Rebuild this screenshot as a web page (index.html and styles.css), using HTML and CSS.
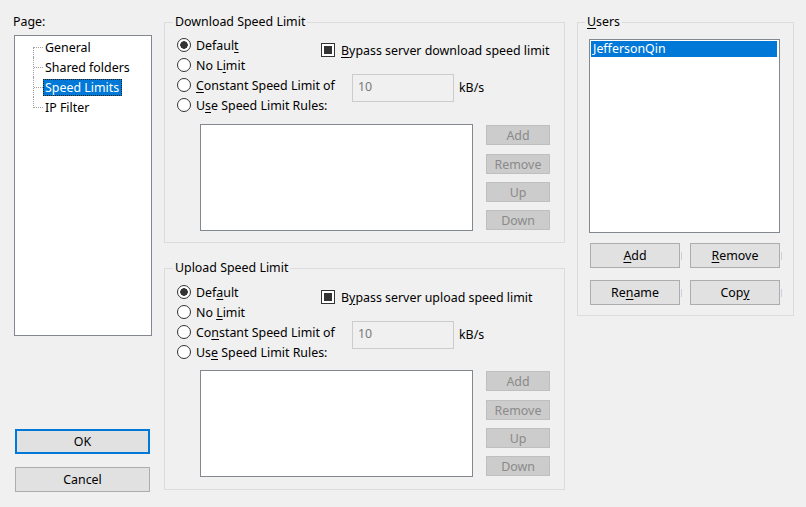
FILE: index.html
```html
<!DOCTYPE html>
<html lang="en">
<head>
<meta charset="utf-8">
<title>Speed Limits</title>
<link rel="stylesheet" href="styles.css">
</head>
<body>
<div class="dialog">
  <div class="col-left">
    <div class="page-label">Page:</div>
    <div class="tree">
      <ul class="tree-list">
        <li><span class="tree-text">General</span></li>
        <li><span class="tree-text">Shared folders</span></li>
        <li class="selected"><span class="tree-text">Speed Limits</span></li>
        <li><span class="tree-text">IP Filter</span></li>
      </ul>
    </div>
    <button class="btn btn-default btn-dialog">OK</button>
    <button class="btn btn-dialog btn-cancel">Cancel</button>
  </div>

  <div class="col-mid">
    <fieldset class="group speed-group">
      <legend>Download Speed Limit</legend>
      <div class="row-a">
        <div class="radio-col">
          <div class="radio-item"><span class="radio checked"></span><span>Defaul<u>t</u></span></div>
          <div class="radio-item"><span class="radio"></span><span>No L<u>i</u>mit</span></div>
        </div>
        <div class="check-item"><span class="checkbox"></span><span><u>B</u>ypass server download speed limit</span></div>
      </div>
      <div class="row-b">
        <div class="radio-col radio-col-b">
          <div class="radio-item"><span class="radio"></span><span><u>C</u>onstant Speed Limit of</span></div>
          <div class="radio-item"><span class="radio"></span><span>U<u>s</u>e Speed Limit Rules:</span></div>
        </div>
        <div class="text-input">10</div>
        <span class="unit">kB/s</span>
      </div>
      <div class="rules-row">
        <div class="listbox rules-list"></div>
        <div class="rule-buttons">
          <button class="btn-disabled">Add</button>
          <button class="btn-disabled">Remove</button>
          <button class="btn-disabled">Up</button>
          <button class="btn-disabled">Down</button>
        </div>
      </div>
    </fieldset>

    <fieldset class="group speed-group upload-group">
      <legend>Upload Speed Limit</legend>
      <div class="row-a">
        <div class="radio-col">
          <div class="radio-item"><span class="radio checked"></span><span>Def<u>a</u>ult</span></div>
          <div class="radio-item"><span class="radio"></span><span>No <u>L</u>imit</span></div>
        </div>
        <div class="check-item"><span class="checkbox"></span><span>B<u>y</u>pass server upload speed limit</span></div>
      </div>
      <div class="row-b">
        <div class="radio-col radio-col-b">
          <div class="radio-item"><span class="radio"></span><span>Co<u>n</u>stant Speed Limit of</span></div>
          <div class="radio-item"><span class="radio"></span><span>Us<u>e</u> Speed Limit Rules:</span></div>
        </div>
        <div class="text-input">10</div>
        <span class="unit">kB/s</span>
      </div>
      <div class="rules-row">
        <div class="listbox rules-list"></div>
        <div class="rule-buttons">
          <button class="btn-disabled">Add</button>
          <button class="btn-disabled">Remove</button>
          <button class="btn-disabled">Up</button>
          <button class="btn-disabled">Down</button>
        </div>
      </div>
    </fieldset>
  </div>

  <div class="col-right">
    <fieldset class="group users-group">
      <legend><u>U</u>sers</legend>
      <div class="listbox users-list">
        <div class="user-item selected-item">JeffersonQin</div>
      </div>
      <div class="user-buttons">
        <button class="btn btn-user"><u>A</u>dd</button>
        <button class="btn btn-user"><u>R</u>emove</button>
      </div>
      <div class="user-buttons user-buttons-2">
        <button class="btn btn-user">Re<u>n</u>ame</button>
        <button class="btn btn-user">Cop<u>y</u></button>
      </div>
    </fieldset>
  </div>
</div>
</body>
</html>
```

FILE: styles.css
```css
* { box-sizing: border-box; }
html, body { margin: 0; padding: 0; }
body {
  background: #f0f0f0;
  font-family: "Noto Sans", "Segoe UI", sans-serif;
  font-size: 12.4px;
  color: #000;
}
u { text-decoration: underline; text-underline-offset: 2px; }

.dialog {
  width: 806px;
  height: 507px;
  display: flex;
  padding-top: 14px;
}

/* left column */
.col-left {
  margin-left: 13px;
  width: 139px;
  display: flex;
  flex-direction: column;
}
.page-label { line-height: 16px; height: 16px; }
.tree {
  margin-top: 5px;
  margin-left: 1px;
  width: 138px;
  height: 301px;
  background: #fff;
  border: 1px solid #828790;
}
.tree-list { list-style: none; margin: 0; padding: 1px 0 0 0; }
.tree-list li {
  position: relative;
  height: 20px;
  display: flex;
  align-items: center;
  padding-left: 28px;
}
.tree-list li::before {
  content: "";
  position: absolute;
  left: 18px;
  top: 0;
  bottom: 0;
  border-left: 1px dotted #a0a0a0;
}
.tree-list li:first-child::before { top: 10px; }
.tree-list li:last-child::before { bottom: 9px; }
.tree-list li::after {
  content: "";
  position: absolute;
  left: 19px;
  top: 10px;
  width: 9px;
  border-top: 1px dotted #a0a0a0;
}
.tree-text {
  padding: 0 2px 0 1px;
  line-height: 15px;
  border: 1px dotted transparent;
  white-space: nowrap;
}
.selected .tree-text {
  background: #0078d7;
  color: #fff;
  border-color: #2a2010;
}

.btn {
  font-family: inherit;
  font-size: inherit;
  color: #000;
  background: #e1e1e1;
  border: 1px solid #adadad;
  padding: 0;
  margin: 0;
}
.btn-dialog {
  margin-left: 2px;
  width: 135px;
  height: 25px;
}
.btn-default { margin-top: 93px; border: 2px solid #0078d7; }
.btn-cancel { margin-top: 13px; }

/* middle column */
.col-mid {
  margin-left: 12px;
  width: 401px;
}
.group {
  margin: 0;
  border: 1px solid #dcdcdc;
  min-width: 0;
}
.group legend {
  padding: 0 2px;
  margin-left: -4px;
  line-height: 16px;
}
.speed-group { padding: 5px 12px 11px 12px; }
.upload-group { margin-top: 17px; padding-top: 6px; padding-bottom: 12px; }

.row-a, .row-b { display: flex; height: 40px; }
.radio-col { width: 144px; flex: none; }
.radio-col-b { width: 175px; }
.radio-item {
  height: 20px;
  display: flex;
  align-items: center;
  white-space: nowrap;
}
.radio {
  width: 14px;
  height: 14px;
  border-radius: 50%;
  border: 1px solid #333;
  background: #fff;
  margin-right: 5px;
  flex: none;
}
.radio.checked {
  background: radial-gradient(circle, #333 0 3.5px, #fff 4px);
}
.check-item {
  margin-top: 7px;
  height: 16px;
  display: flex;
  align-items: center;
  white-space: nowrap;
}
.checkbox {
  width: 14px;
  height: 14px;
  border: 1px solid #333;
  background: #fff;
  padding: 2px;
  margin-right: 6px;
  flex: none;
}
.checkbox::before {
  content: "";
  display: block;
  width: 8px;
  height: 8px;
  background: #333;
}
.text-input {
  width: 102px;
  height: 28px;
  margin-top: -1px;
  border: 1px solid #cccccc;
  background: #f0f0f0;
  color: #7a7a7a;
  padding: 4px 0 0 5px;
  line-height: 16px;
  flex: none;
}
.unit { margin-left: 5px; margin-top: 5px; line-height: 16px; }

.rules-row {
  display: flex;
  margin-top: 9px;
  margin-left: 23px;
}
.upload-group .rules-row { margin-top: 8px; }
.listbox {
  background: #fff;
  border: 1px solid #828790;
}
.rules-list { width: 273px; height: 107px; flex: none; }
.upload-group .rules-list { height: 107px; }
.rule-buttons {
  margin-left: 13px;
  display: flex;
  flex-direction: column;
  padding-top: 1px;
  gap: 8px;
}
.btn-disabled {
  font-family: inherit;
  font-size: inherit;
  width: 64px;
  height: 20px;
  padding: 0;
  margin: 0;
  background: #cccccc;
  border: 1px solid #bfbfbf;
  color: #8a8a8a;
}
.rule-buttons .btn-disabled:nth-child(2) { margin-top: 1px; }

/* right column */
.col-right {
  margin-left: 12px;
  width: 217px;
}
.users-group { padding: 9px 12px 10px 11px; }
.users-list { width: 191px; height: 194px; padding: 1px 2px 0 1px; }
.user-item {
  height: 16px;
  line-height: 16px;
  padding-left: 2px;
  white-space: nowrap;
}
.selected-item { background: #0078d7; color: #fff; }
.user-buttons {
  display: flex;
  gap: 10px;
  margin-top: 10px;
  margin-left: 1px;
}
.user-buttons-2 { margin-top: 12px; }
.btn-user {
  position: relative;
  width: 90px;
  height: 25px;
}
.btn-user::after {
  content: "";
  position: absolute;
  right: -3px;
  top: 8px;
  width: 1px;
  height: 8px;
  background: #cfcfe0;
}
```
